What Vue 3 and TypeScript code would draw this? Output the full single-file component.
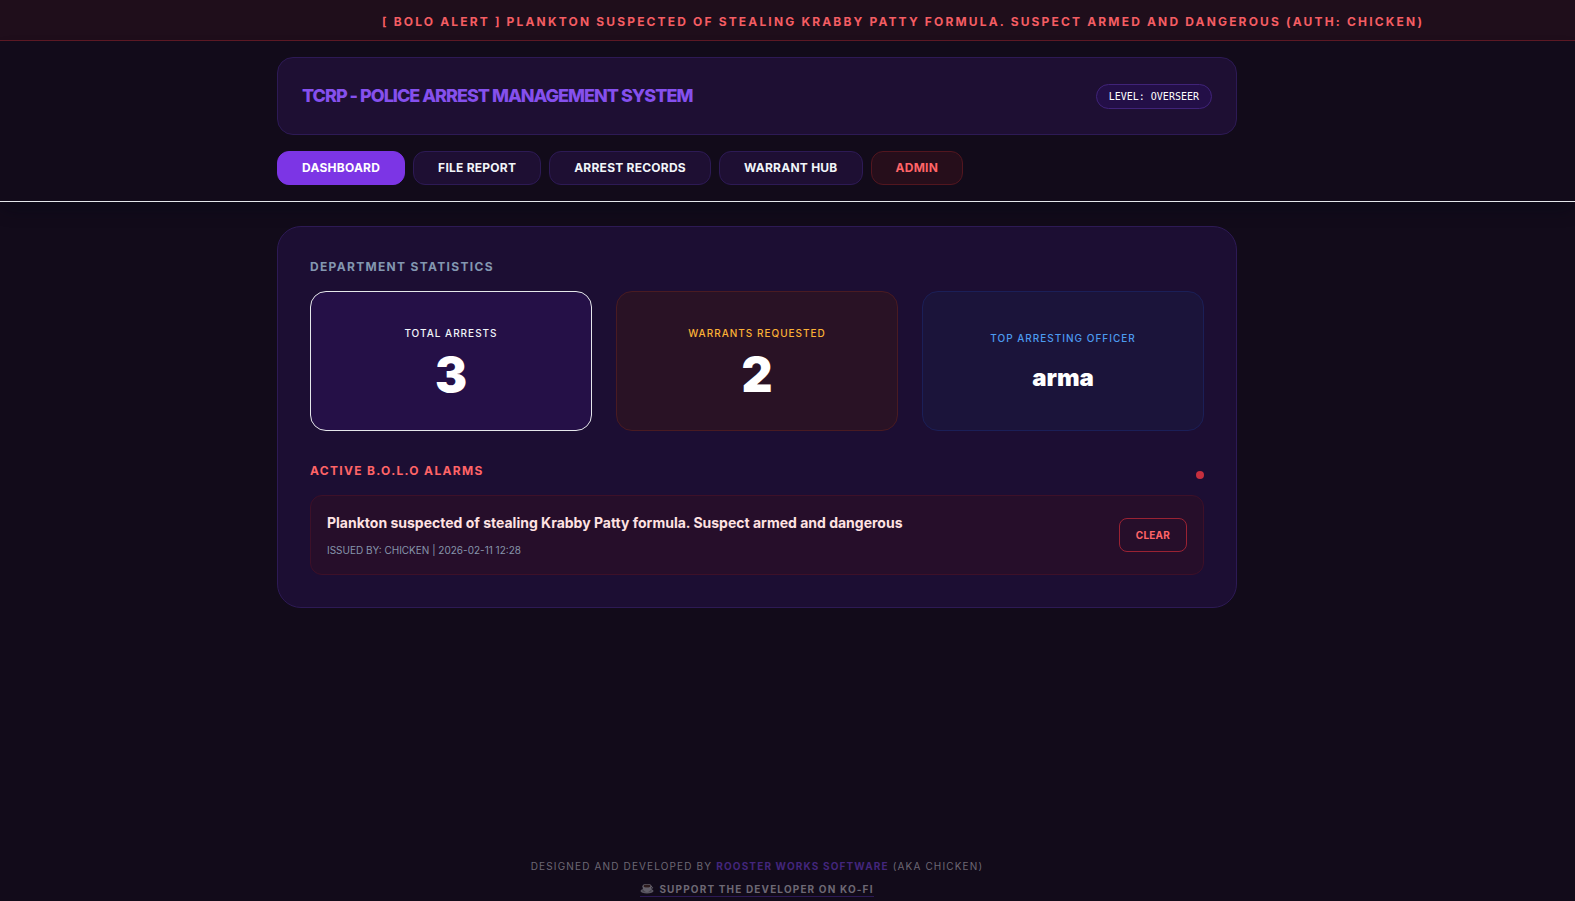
<script setup lang="ts">
import { ref } from 'vue'

interface Tab {
  label: string
  admin?: boolean
}

interface Stat {
  label: string
  value: string
  tone: string
}

interface Alarm {
  id: number
  message: string
  issued: string
}

const tabs: Tab[] = [
  { label: 'DASHBOARD' },
  { label: 'FILE REPORT' },
  { label: 'ARREST RECORDS' },
  { label: 'WARRANT HUB' },
  { label: 'ADMIN', admin: true },
]
const active = ref('DASHBOARD')

const stats: Stat[] = [
  { label: 'TOTAL ARRESTS', value: '3', tone: 'arrests' },
  { label: 'WARRANTS REQUESTED', value: '2', tone: 'warrants' },
  { label: 'TOP ARRESTING OFFICER', value: 'arma', tone: 'officer' },
]

const alarms = ref<Alarm[]>([
  {
    id: 1,
    message: 'Plankton suspected of stealing Krabby Patty formula. Suspect armed and dangerous',
    issued: 'ISSUED BY: CHICKEN | 2026-02-11 12:28',
  },
])

function clearAlarm(id: number): void {
  alarms.value = alarms.value.filter((a) => a.id !== id)
}
</script>

<template>
  <div class="page">
    <div class="ticker" role="alert">
      [ BOLO ALERT ] PLANKTON SUSPECTED OF STEALING KRABBY PATTY FORMULA. SUSPECT ARMED AND DANGEROUS (AUTH: CHICKEN)
    </div>

    <header class="top">
      <div class="wrap">
        <div class="brand">
          <h1>TCRP - POLICE ARREST MANAGEMENT SYSTEM</h1>
          <span class="level">LEVEL: OVERSEER</span>
        </div>
        <nav class="tabs">
          <button
            v-for="tab in tabs"
            :key="tab.label"
            type="button"
            class="tab"
            :class="{ active: tab.label === active, admin: tab.admin }"
            @click="active = tab.label"
          >
            {{ tab.label }}
          </button>
        </nav>
      </div>
    </header>

    <main class="main">
      <section class="wrap panel">
        <h2>DEPARTMENT STATISTICS</h2>
        <div class="stats">
          <article v-for="stat in stats" :key="stat.label" class="stat" :class="stat.tone">
            <p class="stat-label">{{ stat.label }}</p>
            <p class="stat-value">{{ stat.value }}</p>
          </article>
        </div>

        <div class="alarm-head">
          <h2 class="danger">ACTIVE B.O.L.O ALARMS</h2>
          <span class="dot"></span>
        </div>
        <article v-for="alarm in alarms" :key="alarm.id" class="alarm">
          <div>
            <p class="message">{{ alarm.message }}</p>
            <p class="issued">{{ alarm.issued }}</p>
          </div>
          <button type="button" class="clear" @click="clearAlarm(alarm.id)">CLEAR</button>
        </article>
      </section>
    </main>

    <footer class="footer">
      <p>DESIGNED AND DEVELOPED BY <strong>ROOSTER WORKS SOFTWARE</strong> (AKA CHICKEN)</p>
      <a href="#">
        <svg class="cup" viewBox="0 0 26 20" aria-hidden="true">
          <ellipse cx="13" cy="14" rx="13" ry="5" fill="#77757f" />
          <ellipse cx="13" cy="13" rx="9" ry="3" fill="#5a5761" />
          <path d="M20 5c5-1 6 5-1 6" fill="none" stroke="#8f8d96" stroke-width="2" />
          <path d="M4 4c0 7 3 12 9 12s9-5 9-12z" fill="#85838c" />
          <ellipse cx="13" cy="4" rx="9" ry="4" fill="#94929a" />
          <ellipse cx="13" cy="4" rx="7" ry="3" fill="#38221f" />
        </svg>
        SUPPORT THE DEVELOPER ON KO-FI
      </a>
    </footer>
  </div>
</template>

<style>
body {
  margin: 0;
  background: #120b1a;
}
</style>

<style scoped>
.page {
  box-sizing: border-box;
  min-height: 100vh;
  display: flex;
  flex-direction: column;
  font-family: Inter, 'Liberation Sans', sans-serif;
  color: #f1f5f9;
  background: #120b1a;
}

h1,
h2,
p {
  margin: 0;
}

.ticker {
  padding: 14px 0 10px 382px;
  border-bottom: 1px solid #5e1a25;
  background: #1f0e1b;
  color: #f45d63;
  font-size: 12px;
  line-height: 16px;
  font-weight: 700;
  letter-spacing: 0.18em;
  white-space: nowrap;
  overflow: hidden;
}

.top,
.main,
.footer {
  padding-right: 61px;
}

.top {
  padding-top: 16px;
  padding-bottom: 16px;
  border-bottom: 1px solid #e5e7eb;
  box-shadow: 0 10px 16px -3px rgba(4, 8, 20, 0.4);
}

.wrap {
  box-sizing: border-box;
  width: 100%;
  max-width: 960px;
  margin: 0 auto;
}

.brand {
  box-sizing: border-box;
  min-height: 78px;
  padding: 24px;
  display: flex;
  align-items: center;
  justify-content: space-between;
  border: 1px solid #2d1a55;
  border-radius: 16px;
  background: #1e0f33;
}

h1 {
  font-size: 18px;
  line-height: 28px;
  font-weight: 800;
  letter-spacing: -1px;
  color: #8550ed;
}

.level {
  padding: 4px 12px;
  border: 1px solid #402379;
  border-radius: 13px;
  background: #230f47;
  color: #fff;
  font-family: 'DejaVu Sans Mono', monospace;
  font-size: 10px;
  line-height: 15px;
}

.tabs {
  display: flex;
  gap: 8px;
  margin-top: 16px;
}

.tab {
  padding: 8px 24px;
  border: 1px solid #2d1a55;
  border-radius: 12px;
  background: #1e0f33;
  color: #f1f5f9;
  font: inherit;
  font-size: 12px;
  line-height: 16px;
  font-weight: 700;
  letter-spacing: 0.02em;
}

.tab.active {
  border-color: #7c35e5;
  background: #7c35e5;
  color: #fff;
}

.tab.admin {
  border-color: #52161f;
  background: #260e1b;
  color: #ff6467;
}

.main {
  flex: 1;
  padding-top: 24px;
  padding-bottom: 24px;
}

.panel {
  padding: 32px;
  border: 1px solid #2d1a55;
  border-radius: 24px;
  background: #1c0e33;
}

h2 {
  font-size: 12px;
  line-height: 16px;
  font-weight: 700;
  letter-spacing: 0.11em;
  color: #8397b0;
}

.stats {
  display: grid;
  grid-template-columns: repeat(3, 1fr);
  gap: 24px;
  margin-top: 16px;
}

.stat {
  box-sizing: border-box;
  min-height: 140px;
  padding-top: 2px;
  display: flex;
  flex-direction: column;
  align-items: center;
  justify-content: center;
  border: 1px solid;
  border-radius: 16px;
}

.stat.arrests {
  border-color: #e5e7eb;
  background: #251047;
}

.stat.warrants {
  border-color: #491b22;
  background: #291225;
  color: #fbb136;
}

.stat.officer {
  border-color: #1b1f57;
  background: #1b143a;
  color: #4c9bf0;
}

.stat-label {
  font-size: 10px;
  line-height: 16px;
  font-weight: 500;
  letter-spacing: 1px;
}

.stat-value {
  margin-top: 10px;
  color: #fff;
  font-size: 48px;
  line-height: 48px;
  font-weight: 900;
}

.officer .stat-value {
  margin-top: 16px;
  font-size: 24px;
  line-height: 32px;
}

.alarm-head {
  display: flex;
  justify-content: space-between;
  align-items: flex-end;
  margin-top: 32px;
  margin-bottom: 16px;
}

h2.danger {
  color: #ff6467;
}

.dot {
  width: 8px;
  height: 8px;
  border-radius: 50%;
  background: #c62f3e;
}

.alarm {
  box-sizing: border-box;
  min-height: 80px;
  padding: 16px;
  display: flex;
  align-items: center;
  justify-content: space-between;
  border: 1px solid #3d1028;
  border-radius: 12px;
  background: #260e2a;
}

.message {
  color: #ffe2e2;
  font-size: 14px;
  line-height: 22px;
  font-weight: 700;
}

.issued {
  margin-top: 8px;
  color: #8695ab;
  font-size: 10px;
  line-height: 16px;
}

.clear {
  padding: 8px 16px;
  border: 1px solid #9a2233;
  border-radius: 8px;
  background: transparent;
  color: #ff6467;
  font: inherit;
  font-size: 10px;
  line-height: 16px;
  font-weight: 700;
  letter-spacing: 0.02em;
}

.footer {
  display: flex;
  flex-direction: column;
  align-items: center;
  gap: 8px;
  padding-bottom: 4px;
  color: #6d6874;
  font-size: 10px;
  line-height: 16px;
  letter-spacing: 0.115em;
}

.footer strong {
  color: #43267c;
  font-weight: 700;
}

.footer a {
  display: flex;
  align-items: center;
  gap: 5px;
  border-bottom: 1px solid #2d1a55;
  color: #6d6874;
  font-weight: 700;
  line-height: 14px;
  text-decoration: none;
}

.cup {
  width: 14px;
  height: 10px;
  opacity: 0.7;
}
</style>
